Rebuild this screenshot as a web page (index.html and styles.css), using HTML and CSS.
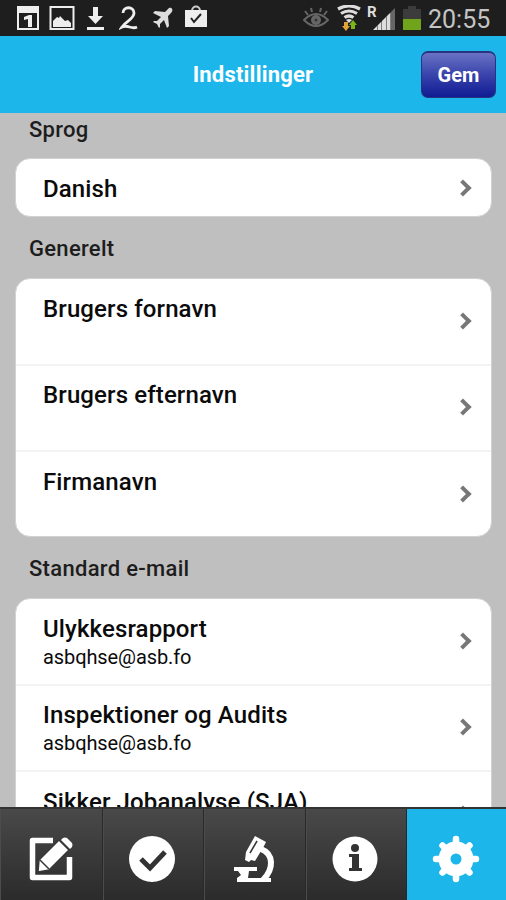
FILE: index.html
```html
<!DOCTYPE html>
<html lang="da">
<head>
    <meta charset="UTF-8">
    <meta name="viewport" content="width=device-width, initial-scale=1.0">
    <title>Indstillinger</title>
    <link rel="stylesheet" href="styles.css">
</head>
<body>
    <div class="status-bar">
        <div class="status-left">
            <svg width="24" height="26" viewBox="0 0 24 26"><path fill="#eee" fill-rule="evenodd" d="M1 1h22v24H1zM3 8v15h18V8z"/><path fill="#eee" d="M8 12l5-2h3v12h-4v-8l-4 1z"/></svg>
            <svg width="26" height="26" viewBox="0 0 26 26"><path fill="none" stroke="#eee" stroke-width="2" d="M1.500 2h23v22h-23z"/><path fill="#eee" d="M4 22v-6l4-4 2 1 1-2 5 5 3-1 3 3v4z"/></svg>
            <svg width="20" height="26" viewBox="0 0 20 26"><path fill="#eee" d="M8 2h5v9h5l-7.500 8L3 11h5zM2 22h17v3H2z"/></svg>
            <svg width="20" height="26" viewBox="0 0 20 26"><path fill="none" stroke="#eee" stroke-width="2.800" d="M4 8c0-7 11-7 11 0 0 6-8 8-12 14 6-3 9 3 15 0"/></svg>
            <svg width="22" height="26" viewBox="0 0 22 26"><path fill="#ddd" d="M20 4c1 1 0 3-1 4l-3 3 1 10-2 2-3-8-4 4v3l-1 1-2-4-4-2 1-1h3l4-4-8-4 2-2 10 1 3-3c1-1 3-2 4 0z"/></svg>
            <svg width="24" height="26" viewBox="0 0 24 26"><path fill="none" stroke="#ccc" stroke-width="2" d="M8 6c0-6 8-6 8 0"/><path fill="#eee" d="M1 5h22v17H1z"/><path fill="none" stroke="#222" stroke-width="2" d="M7 13l3 4 7-8"/></svg>
        </div>
        <div class="status-right">
            <svg class="eye" width="26" height="26" viewBox="0 0 26 26"><path fill="none" stroke="#666" stroke-width="2" d="M1 15q12-12 24 0-12 12-24 0zM2 6l3 4M8 3l1 4M18 3l-1 4M24 6l-3 4"/><circle cx="13" cy="15" r="5" fill="#666"/><circle cx="13" cy="15" r="1.500" fill="#333"/></svg>
            <svg class="wifi" width="26" height="26" viewBox="0 0 26 26"><path fill="none" stroke="#ddd" stroke-width="3.200" d="M2 4q11-6 22 0M5 8.500q8-5 16 0M8.500 12.500q4.500-3 9 0"/><path fill="#ddd" d="M10 15q3-2 6 0l-3 3z"/><path fill="#e3a13c" d="M8 17h4v4h2l-4 5-4-5h2z"/><path fill="#7cb518" d="M15 24v-4h-2l4-5 4 5h-2v4z"/></svg>
            <span class="roaming">R</span>
            <svg class="signal" width="24" height="26" viewBox="0 0 24 26"><path fill="#ddd" d="M1 25l4-4v4zM5.500 20.500l4-4V25h-4zM10 16l4-4v13h-4zM14.500 11.500l4-4V25h-4z"/><path fill="#666" d="M19 7l4-4v22h-4z"/></svg>
            <svg class="battery" width="18" height="26" viewBox="0 0 18 26"><path fill="#3c3c3c" d="M5 1h8v3h5v11H0V4h5z"/><path fill="#70a41b" d="M0 14h18v11H0z"/></svg>
            <span class="clock">20:55</span>
        </div>
    </div>

    <header class="header">
        <h1>Indstillinger</h1>
        <button class="save-btn">Gem</button>
    </header>

    <main class="content">
        <h2 class="group-title">Sprog</h2>
        <ul class="card">
            <li class="row row-single">
                <h3>Danish</h3>
                <span class="chevron"></span>
            </li>
        </ul>

        <h2 class="group-title">Generelt</h2>
        <ul class="card">
            <li class="row">
                <h3>Brugers fornavn</h3>
                <span class="chevron"></span>
            </li>
            <li class="row">
                <h3>Brugers efternavn</h3>
                <span class="chevron"></span>
            </li>
            <li class="row">
                <h3>Firmanavn</h3>
                <span class="chevron"></span>
            </li>
        </ul>

        <h2 class="group-title">Standard e-mail</h2>
        <ul class="card">
            <li class="row">
                <div>
                    <h3>Ulykkesrapport</h3>
                    <p>asbqhse@asb.fo</p>
                </div>
                <span class="chevron"></span>
            </li>
            <li class="row">
                <div>
                    <h3>Inspektioner og Audits</h3>
                    <p>asbqhse@asb.fo</p>
                </div>
                <span class="chevron"></span>
            </li>
            <li class="row">
                <h3>Sikker Jobanalyse (SJA)</h3>
                <span class="chevron"></span>
            </li>
        </ul>
    </main>

    <nav class="tabs">
        <a class="tab">
            <svg width="48" height="48" viewBox="0 0 48 48"><path fill="none" stroke="#fff" stroke-width="5.500" stroke-linejoin="round" d="M27 5.500H6.500v37h37V22"/><path fill="#fff" stroke="#383838" stroke-width="1.500" d="M12 37l1-12L33 5l10 10-20 20z"/><path fill="#fff" d="M35 5l2-2q2-1 4 0l5 5q1 2 0 4l-2 2z"/><path stroke="#383838" stroke-width="1.500" d="M14 25l9 9"/></svg>
        </a>
        <a class="tab">
            <svg width="48" height="48" viewBox="0 0 48 48"><circle cx="24" cy="24" r="23" fill="#fff"/><path fill="none" stroke="#333" stroke-width="5" d="M13 24l9 9 15-16"/></svg>
        </a>
        <a class="tab">
            <svg width="48" height="48" viewBox="0 0 48 48"><path fill="#fff" d="M25 1l11 6-2 4-9 15-4-1-2 2-4-2 1-8zM4 32h23v4h-8l-1 7h23v4H7v-4l4-3-3-4H4z"/><path fill="none" stroke="#333" stroke-width="1.500" d="M27 6l-7 12"/><path fill="none" stroke="#fff" stroke-width="6" d="M31 14c13 5 13 20 2 31"/></svg>
        </a>
        <a class="tab">
            <svg width="48" height="48" viewBox="0 0 48 48"><circle cx="24" cy="24" r="22.500" fill="#fff"/><circle cx="24" cy="13" r="4" fill="#333"/><path fill="#333" d="M18 19h10v14h3v3H18v-3h3V22h-3z"/></svg>
        </a>
        <a class="tab active">
            <svg width="48" height="48" viewBox="0 0 48 48"><g fill="none" stroke="#fff"><circle cx="24" cy="24" r="11.500" stroke-width="12"/><path stroke-width="6.500" stroke-linecap="round" d="M24 4v5M24 39v5M4 24h5M39 24h5M10.500 10.500l4 4M33.500 33.500l4 4M10.500 37.500l4-4M33.500 14.500l4-4"/></g></svg>
        </a>
    </nav>
</body>
</html>
```

FILE: styles.css
```css
* {
    margin: 0;
    padding: 0;
    box-sizing: border-box;
}

body {
    display: flex;
    flex-direction: column;
    height: 900px;
    overflow: hidden;
    background: #bfbfbf;
    color: #0b0b0b;
    font-family: Roboto, sans-serif;
}

/* Status bar */
.status-bar {
    display: flex;
    justify-content: space-between;
    flex: none;
    height: 36px;
    padding: 5px 15px 0 16px;
    background: #1e1e1e;
}

.status-left,
.status-right {
    display: flex;
    align-items: flex-start;
}

.status-left {
    gap: 9px;
}

.status-left svg:nth-child(3) {
    margin-left: 1px;
}

.status-left svg:nth-child(4) {
    margin-left: 5px;
}

.status-left svg:nth-child(5) {
    margin-left: 4px;
}

.status-left svg:nth-child(6) {
    margin-left: 1px;
}

.wifi {
    margin-left: 7px;
}

.eye {
    margin-left: 2px;
}

.roaming {
    width: 9px;
    margin-left: 5px;
    color: #ddd;
    font-size: 15px;
    font-weight: 700;
    line-height: 15px;
}

.signal {
    margin-left: -4px;
}

.battery {
    margin-left: 7px;
}

.clock {
    width: 63px;
    margin-left: 7px;
    color: #c4c4c4;
    font-size: 25px;
    line-height: 29px;
}

/* Header */
.header {
    display: grid;
    grid-template-columns: 1fr auto 1fr;
    align-items: center;
    flex: none;
    height: 77px;
    padding: 0 10px;
    background: #1cb6ea;
}

.header h1 {
    grid-column: 2;
    color: #fff;
    font-size: 22px;
    font-weight: 700;
    letter-spacing: 0.2px;
}

.save-btn {
    justify-self: end;
    width: 75px;
    height: 47px;
    border: 1px solid #27347f;
    border-top-width: 2px;
    border-radius: 7px;
    background: linear-gradient(#6a73c4, #3843ab 50%, #101b93);
    color: #fff;
    font-family: inherit;
    font-size: 20px;
    font-weight: 700;
}

/* Settings list */
.content {
    flex: 1;
    min-height: 0;
    padding: 0 14px 0 15px;
    overflow: hidden;
}

.group-title {
    height: 61px;
    padding: 19px 14px 0;
    color: #1d1d1d;
    font-size: 22px;
    font-weight: 500;
    letter-spacing: 0.3px;
    line-height: 26px;
}

.group-title:first-child {
    height: 45px;
    padding-top: 4px;
}

.card {
    border: 1px solid #d2d2d2;
    border-radius: 15px;
    background: #fff;
    list-style: none;
}

.row {
    display: flex;
    justify-content: space-between;
    height: 86.5px;
    padding: 15.5px 22px 0 27px;
    border-bottom: 2px solid #f3f3f3;
}

.row:last-child {
    height: 84px;
    border-bottom: none;
}

.row.row-single {
    height: 57px;
    padding-top: 16px;
}

.row h3 {
    font-size: 24px;
    font-weight: 500;
    letter-spacing: 0.12px;
    line-height: 28px;
}

.row p {
    font-size: 20px;
    letter-spacing: -0.1px;
    line-height: 29px;
}

.chevron {
    width: 12px;
    height: 12px;
    margin-top: 20px;
    border: solid #777;
    border-width: 4px 4px 0 0;
    transform: rotate(45deg);
}

.row-single .chevron {
    margin-top: 7px;
}

/* Bottom tabs */
.tabs {
    display: grid;
    grid-template-columns: 103px 101px 102px 101px 1fr;
    flex: none;
    height: 93px;
    border-top: 2px solid #333;
    background: linear-gradient(#494949, #2b2b2b);
}

.tab {
    display: flex;
    align-items: center;
    justify-content: center;
    padding: 8px 2px 0 0;
    border-right: 1px solid #292929;
    box-shadow: inset 1px 0 #4c4c4c;
}

.tab.active {
    border-right: none;
    background: #1cb6ea;
    box-shadow: none;
}
```
